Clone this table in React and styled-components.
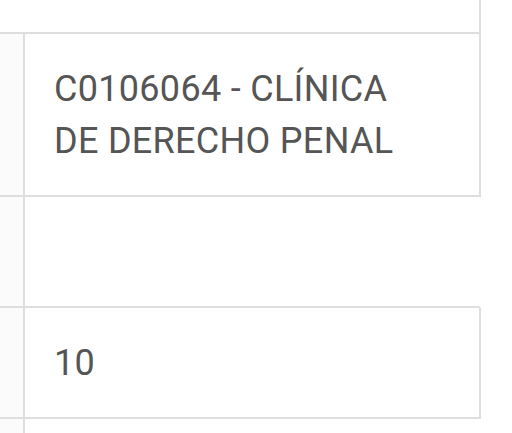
import React from "react";
import styled, { createGlobalStyle } from "styled-components";

const Global = createGlobalStyle`
  *, *::before, *::after { box-sizing: border-box; }
  html, body { margin: 0; padding: 0; background: #fff; }
  body { font-family: Roboto, "Liberation Sans", sans-serif; }
`;

const Table = styled.div`
  display: grid;
  grid-template-columns: 25px 456px;
  width: 481px;
`;

const TopRow = styled.div`
  grid-column: 1 / 3;
  height: 34px;
  border-right: 2px solid #dedede;
  border-bottom: 2px solid #dedede;
`;

const Label = styled.div`
  background: #fbfbfb;
  border-right: 2px solid #dedede;
  border-bottom: ${(p) => (p.$last ? "none" : "2px solid #dedede")};
  height: ${(p) => p.$h}px;
`;

const Value = styled.div`
  display: flex;
  align-items: center;
  padding: 0 80px 0 29px;
  height: ${(p) => p.$h}px;
  border-right: ${(p) => (p.$open ? "2px solid transparent" : "2px solid #dedede")};
  border-bottom: ${(p) => (p.$last ? "none" : "2px solid #dedede")};
  font-size: 36px;
  line-height: 52px;
  color: #555;
  letter-spacing: 0.3px;
`;

export default function App() {
  return (
    <>
      <Global />
      <Table>
        <TopRow />
        <Label $h={163} />
        <Value $h={163}>C0106064 - CLÍNICA DE DERECHO PENAL</Value>
        <Label $h={111} />
        <Value $h={111} $open />
        <Label $h={111} />
        <Value $h={111}>10</Value>
        <Label $h={20} $last />
        <Value $h={20} $last $open />
      </Table>
    </>
  );
}
